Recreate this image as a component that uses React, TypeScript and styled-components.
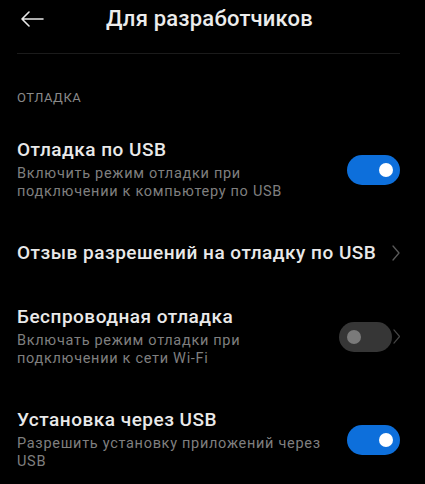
import styled, { createGlobalStyle } from 'styled-components';

const GlobalStyle = createGlobalStyle`
  html, body {
    margin: 0;
    padding: 0;
    background: #000;
    overflow: hidden;
  }
  body {
    font-family: Roboto, "Noto Sans", "Liberation Sans", sans-serif;
    -webkit-font-smoothing: antialiased;
  }
`;

const Screen = styled.div`
  width: 425px;
  min-height: 484px;
  background: #000;
  display: flex;
  flex-direction: column;
  & > * {
    flex-shrink: 0;
  }
`;

const Header = styled.header`
  height: 37px;
  padding: 0 20px;
  display: flex;
  align-items: center;
  gap: 62px;
`;

const BackButton = styled.button`
  width: 24px;
  height: 24px;
  padding: 0;
  border: 0;
  background: none;
  display: flex;
  align-items: center;
  justify-content: center;
  color: #e8e8e8;
`;

const Title = styled.h1`
  margin: 0;
  font-size: 22px;
  font-weight: 500;
  color: #ececec;
  letter-spacing: 0.2px;
`;

const Divider = styled.hr`
  margin: 16px 25px 0 17px;
  border: 0;
  height: 1px;
  background: #1b1b1b;
`;

const SectionLabel = styled.div`
  margin: 36px 0 12px 17px;
  font-size: 13px;
  line-height: 16px;
  letter-spacing: 0.5px;
  color: #8a8a8a;
`;

const List = styled.div`
  display: flex;
  flex-direction: column;
`;

const Row = styled.div`
  display: flex;
  align-items: center;
  justify-content: space-between;
  padding: 20px 25px 20px 17px;
`;

const Texts = styled.div`
  display: flex;
  flex-direction: column;
  gap: 3px;
`;

const RowTitle = styled.div`
  font-size: 19px;
  line-height: 24px;
  font-weight: 500;
  letter-spacing: 0.5px;
  color: #e9e9e9;
`;

const RowSubtitle = styled.div`
  font-size: 14.5px;
  line-height: 18px;
  letter-spacing: 0.7px;
  color: #7f7f7f;
`;

const Controls = styled.div`
  display: flex;
  align-items: center;
  gap: 1px;
`;

const Track = styled.div<{ $on: boolean }>`
  position: relative;
  width: 53px;
  height: 30px;
  border-radius: 15px;
  background: ${p => (p.$on ? '#0d6fdb' : '#363636')};
`;

const Knob = styled.span<{ $on: boolean }>`
  position: absolute;
  top: 8px;
  left: ${p => (p.$on ? '32px' : '8px')};
  width: 14px;
  height: 14px;
  border-radius: 50%;
  background: ${p => (p.$on ? '#ffffff' : '#7a7a7a')};
`;

const Chevron = ({ size, color }: { size: number; color: string }) => (
  <svg width={size / 2} height={size} viewBox="0 0 8 16" fill="none">
    <path d="M1 1 L7 8 L1 15" stroke={color} strokeWidth="1.3" strokeLinejoin="round" strokeLinecap="round" />
  </svg>
);

const Switch = ({ on }: { on: boolean }) => (
  <Track $on={on}>
    <Knob $on={on} />
  </Track>
);

type Item = {
  title: string;
  lines?: string[];
  toggle?: boolean;
  chevron?: boolean;
};

const items: Item[] = [
  { title: 'Отладка по USB', lines: ['Включить режим отладки при', 'подключении к компьютеру по USB'], toggle: true },
  { title: 'Отзыв разрешений на отладку по USB', chevron: true },
  { title: 'Беспроводная отладка', lines: ['Включать режим отладки при', 'подключении к сети Wi-Fi'], toggle: false, chevron: true },
  { title: 'Установка через USB', lines: ['Разрешить установку приложений через', 'USB'], toggle: true },
];

export default function App() {
  return (
    <Screen>
      <GlobalStyle />
      <Header>
        <BackButton aria-label="Назад">
          <svg width="24" height="16" viewBox="0 0 24 16" fill="none">
            <path d="M23 8 H2 M9 1 L2 8 L9 15" stroke="currentColor" strokeWidth="1.6" strokeLinecap="round" strokeLinejoin="round" />
          </svg>
        </BackButton>
        <Title>Для разработчиков</Title>
      </Header>
      <Divider />
      <SectionLabel>ОТЛАДКА</SectionLabel>
      <List>
        {items.map(item => (
          <Row key={item.title}>
            <Texts>
              <RowTitle>{item.title}</RowTitle>
              {item.lines && (
                <RowSubtitle>
                  {item.lines.map((l, i) => (
                    <div key={i}>{l}</div>
                  ))}
                </RowSubtitle>
              )}
            </Texts>
            <Controls>
              {item.toggle !== undefined && <Switch on={item.toggle} />}
              {item.chevron && (
                item.toggle !== undefined
                  ? <Chevron size={15} color="#454545" />
                  : <Chevron size={16} color="#5a5a5a" />
              )}
            </Controls>
          </Row>
        ))}
      </List>
    </Screen>
  );
}
